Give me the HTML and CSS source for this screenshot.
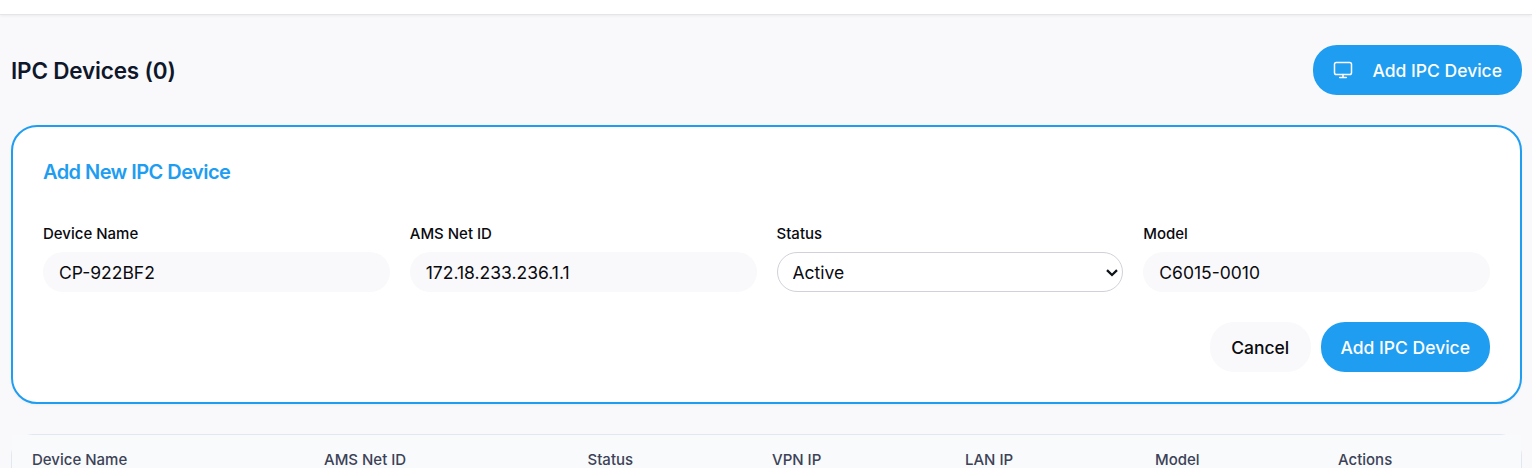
FILE: index.html
```html
<!DOCTYPE html>
<html lang="en">
<head>
<meta charset="utf-8">
<title>IPC Devices</title>
<link rel="stylesheet" href="styles.css">
</head>
<body>
<div class="topbar"></div>
<main class="page">
  <header class="head">
    <h2 class="title">IPC Devices (0)</h2>
    <button class="btn primary add">
      <svg class="icon" width="20" height="20" viewBox="0 0 20 20" fill="none" stroke="currentColor" stroke-width="1.5" stroke-linecap="round" stroke-linejoin="round"><rect x="1.5" y="2.4" width="17" height="12.2" rx="1.8"/><path d="M6.7 17.5h6.6M10 14.5v3"/></svg>
      Add IPC Device
    </button>
  </header>
  <section class="card">
    <h3 class="card-title">Add New IPC Device</h3>
    <div class="fields">
      <label class="field"><span class="label">Device Name</span><input class="input" value="CP-922BF2"></label>
      <label class="field"><span class="label">AMS Net ID</span><input class="input" value="172.18.233.236.1.1"></label>
      <label class="field"><span class="label">Status</span>
        <span class="select-wrap">
          <select class="input select"><option>Active</option></select>
          <svg class="chevron" width="12" height="8" viewBox="0 0 12 8" fill="none" stroke="currentColor" stroke-width="2.3"><path d="M1 1.2l5 4.8 5-4.8"/></svg>
        </span>
      </label>
      <label class="field"><span class="label">Model</span><input class="input" value="C6015-0010"></label>
    </div>
    <div class="actions">
      <button class="btn cancel">Cancel</button>
      <button class="btn primary">Add IPC Device</button>
    </div>
  </section>
  <div class="table">
    <div class="table-head">
      <span>Device Name</span><span>AMS Net ID</span><span>Status</span><span>VPN IP</span><span>LAN IP</span><span>Model</span><span>Actions</span>
    </div>
  </div>
</main>
</body>
</html>
```
FILE: styles.css
```css
* { box-sizing: border-box; }
body {
  display: flex;
  flex-direction: column;
  margin: 0;
  height: 468px;
  overflow: hidden;
  background: #f9f9fb;
  color: #0a0a0f;
  font-family: Inter, sans-serif;
  font-size: 17.5px;
}
.topbar { flex: none; height: 15px; background: #fff; border-bottom: 1px solid #e4e5e9; box-shadow: 0 1px 3px rgba(0,0,0,.06); }
.page { display: flex; flex-direction: column; flex: 1; min-height: 0; padding: 30px 10px 0 11px; }
.head { display: flex; flex: none; justify-content: space-between; align-items: center; height: 50px; }
.title { margin: 0; padding-top: 2px; color: #0f172a; font-size: 22.5px; font-weight: 600; line-height: 30px; letter-spacing: -.18px; }
.btn { height: 50px; padding: 0 20px; border: 0; border-radius: 24px; font: 500 17.5px/25px Inter, sans-serif; white-space: nowrap; }
.primary { background: #1e9df1; color: #fff; }
.add { display: flex; align-items: center; gap: 20px; }
.icon { display: block; }
.card { flex: none; height: 279px; margin-top: 30px; padding: 30px; background: #fff; border: 2px solid #1e9df1; border-radius: 26px; box-shadow: 0 1px 3px rgba(0,0,0,.05); }
.card-title { margin: 0; color: #1e9df1; font-size: 20px; line-height: 30px; font-weight: 600; letter-spacing: -.56px; }
.fields { display: grid; grid-template-columns: repeat(4, 1fr); gap: 20px; margin-top: 34px; }
.field { display: flex; flex-direction: column; min-width: 0; }
.label { font-size: 15px; line-height: 25px; font-weight: 500; margin-bottom: 6px; }
.input { display: block; width: 100%; height: 40px; padding: 0 16px; border: 0; border-radius: 20px; background: #f9f9fb; color: #0a0a0f; font: 17.5px/25px Inter, sans-serif; }
.select-wrap { position: relative; display: block; }
.select { appearance: none; padding: 0 24px 0 15px; border: 1px solid #d1d1da; background: #fff; }
.chevron { position: absolute; right: 5px; top: 17px; color: #0f1419; pointer-events: none; }
.actions { display: flex; justify-content: flex-end; gap: 10px; margin-top: 30px; }
.cancel { padding: 0 21.25px; background: #f9f9fb; color: #0a0a0f; }
.table { flex: 1; min-height: 0; margin-top: 30px; border: 1px solid #e2e8f0; border-bottom: 0; border-radius: 22px 22px 0 0; }
.table-head { display: grid; grid-template-columns: 292px 263.5px 184.5px 193px 190px 183px 1fr; height: 33px; padding: 12px 20px 0; background: #f8fafc; font-size: 15px; line-height: 25px; font-weight: 500; color: #3c4257; }
```
